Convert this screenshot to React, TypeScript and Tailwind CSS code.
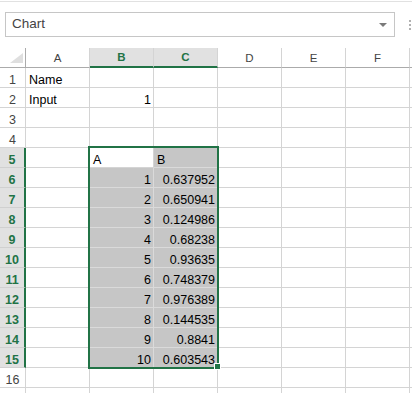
import React from "react";

const green = "#217346";

const values = [
  "0.637952",
  "0.650941",
  "0.124986",
  "0.68238",
  "0.93635",
  "0.748379",
  "0.976389",
  "0.144535",
  "0.8841",
  "0.603543",
];

interface RowData {
  n: number;
  a?: string;
  b?: string;
  c?: string;
  bRight?: boolean;
  cRight?: boolean;
  hideLabel?: boolean;
}

const rows: RowData[] = [
  { n: 1, a: "Name" },
  { n: 2, a: "Input", b: "1", bRight: true },
  { n: 3 },
  { n: 4 },
  { n: 5, b: "A", c: "B" },
  ...values.map((v, i) => ({
    n: i + 6,
    b: String(i + 1),
    c: v,
    bRight: true,
    cRight: true,
  })),
  { n: 16 },
  // only the top of row 17 peeks in at the bottom edge
  { n: 17, hideLabel: true },
];

const cols = ["A", "B", "C", "D", "E", "F"];
const selCols = ["B", "C"];

function isSelected(n: number, col: string) {
  return n >= 5 && n <= 15 && selCols.includes(col);
}

function Cell({
  text,
  right,
  shaded,
}: {
  text?: string;
  right?: boolean;
  shaded?: boolean;
}) {
  return (
    <div
      className={`flex h-[20px] items-end overflow-visible whitespace-nowrap border-r border-b leading-[14px] ${
        right ? "justify-end pr-[2px]" : "justify-start pl-[3px]"
      } ${shaded ? "border-[#dadada] bg-[#c6c6c6]" : "border-[#d4d4d4] bg-white"}`}
    >
      {text}
    </div>
  );
}

function RowHeader({ n, hideLabel }: { n: number; hideLabel?: boolean }) {
  const hl = n >= 5 && n <= 15;
  return (
    <div
      className={`flex h-[20px] items-end justify-center border-b leading-[14px] ${
        hl
          ? "border-r-2 border-b-[#d0d0d0] border-r-[#217346] bg-[#e1e1e1] font-bold text-[#217346]"
          : "border-r border-[#d4d4d4] bg-white text-[#444444]"
      }`}
    >
      {hideLabel ? null : n}
    </div>
  );
}

export default function App() {
  return (
    <div
      className="relative h-[393px] w-[412px] overflow-hidden bg-white"
      style={{ fontFamily: '"Liberation Sans", Arial, sans-serif' }}
    >
      {/* name box */}
      <div className="h-[48px] pt-px">
        <div className="flex h-full items-start border-t border-[#e1e1e1] pt-[10px] pl-[5px]">
          <div className="flex h-[25px] w-[390px] items-center justify-between border border-[#c6c6c6] pr-[7px] pl-[6px] text-[13.5px] text-[#444444]">
            <span>Chart</span>
            <svg width="8" height="4" viewBox="0 0 8 4">
              <path d="M0 0 L8 0 L4 4 Z" fill="#7a7a7a" />
            </svg>
          </div>
          <div className="ml-[14px] flex flex-col gap-[2px] pt-[8px]">
            <span className="h-[2px] w-[2px] bg-[#b0b0b0]" />
            <span className="h-[2px] w-[2px] bg-[#b0b0b0]" />
            <span className="h-[2px] w-[2px] bg-[#b0b0b0]" />
          </div>
        </div>
      </div>

      {/* sheet grid */}
      <div className="grid grid-cols-[26px_repeat(6,64px)_1fr] text-[12.5px] text-black">
        {/* column header row */}
        <div className="relative h-[20px] border-r border-b border-[#ababab] bg-white">
          <svg
            className="absolute top-[5px] left-[10px]"
            width="13"
            height="10"
            viewBox="0 0 13 10"
          >
            <path d="M13 0 L13 10 L0 10 Z" fill="#dfdfdf" />
          </svg>
        </div>
        {cols.map((c) => {
          const hl = selCols.includes(c);
          return (
            <div
              key={c}
              className={`flex h-[20px] items-center justify-center border-r border-r-[#d4d4d4] pt-[2px] text-[11.5px] ${
                hl
                  ? "border-b-2 border-b-[#217346] bg-[#e1e1e1] font-bold text-[#217346]"
                  : "border-b border-b-[#ababab] bg-white text-[#444444]"
              }`}
            >
              {c}
            </div>
          );
        })}
        <div className="h-[20px] border-b border-[#ababab]" />

        {rows.map((r) => (
          <React.Fragment key={r.n}>
            <RowHeader n={r.n} hideLabel={r.hideLabel} />
            <Cell text={r.a} shaded={false} />
            <Cell
              text={r.b}
              right={r.bRight}
              shaded={isSelected(r.n, "B") && r.n !== 5}
            />
            <Cell text={r.c} right={r.cRight} shaded={isSelected(r.n, "C")} />
            <Cell />
            <Cell />
            <Cell />
            <div className="h-[20px] border-b border-[#d4d4d4]" />
          </React.Fragment>
        ))}
      </div>

      {/* selection outline */}
      <div
        className="pointer-events-none absolute top-[146px] left-[88px] h-[223px] w-[131px] border-2"
        style={{ borderColor: green }}
      />
      {/* fill handle */}
      <div className="absolute top-[363px] left-[214px] h-[7px] w-[7px] border border-white bg-[#217346]" />
    </div>
  );
}
